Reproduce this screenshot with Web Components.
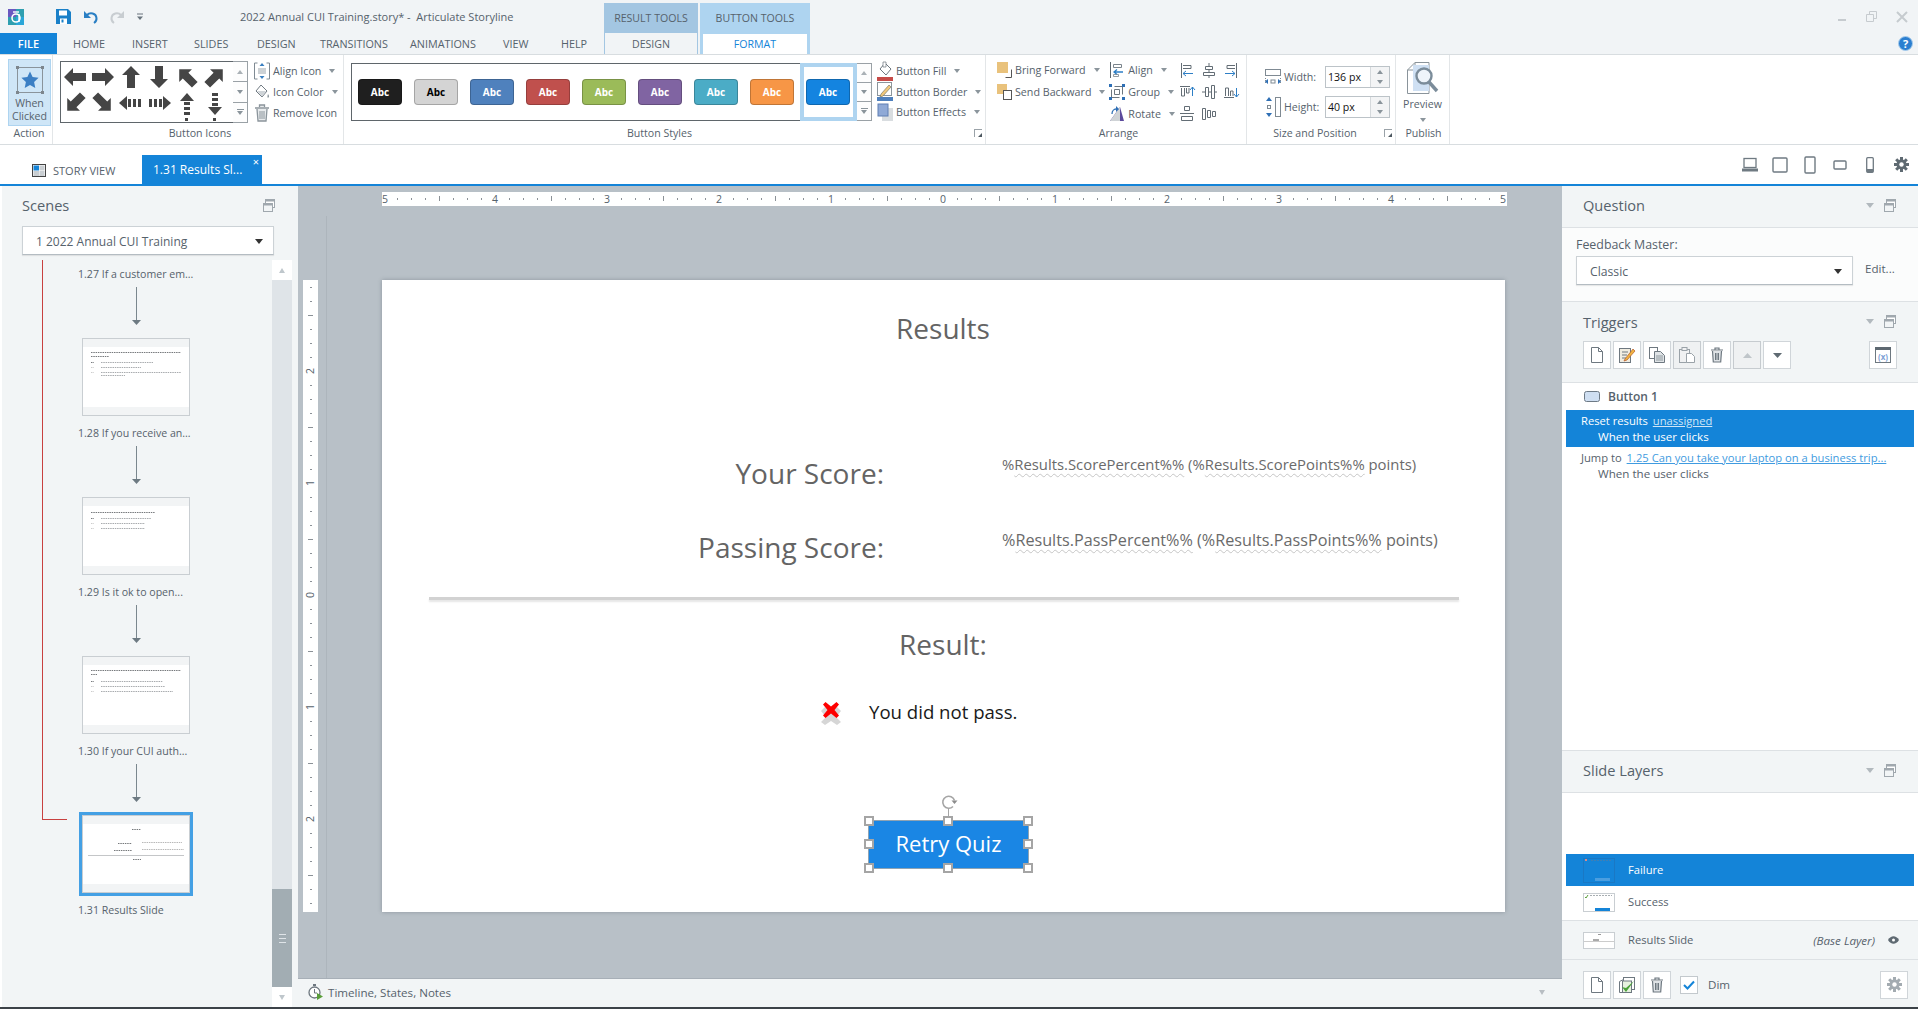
<!DOCTYPE html>
<html>
<head>
<meta charset="utf-8">
<title>Articulate Storyline</title>
<style>
  html, body { margin: 0; padding: 0; background: #fff; overflow: hidden; }
  body { width: 1918px; height: 1009px; font: 11px "Open Sans", "Liberation Sans", sans-serif; color: #56626c; }
</style>
</head>
<body>
<story-app></story-app>

<script>
// Small helper: every element gets an open shadow root with its own styles
function comp(name, css, html) {
    customElements.define(name, class extends HTMLElement {
        constructor() {
            super();
            this.attachShadow({ mode: 'open' });
        }
        connectedCallback() {
            const body = typeof html === 'function' ? html(this) : html;
            this.shadowRoot.innerHTML = `<style>${css}</style>${body}`;
        }
    });
}

const BLUE = '#1484d8';
const arrowSvg = (r) => `<svg width="24" height="24" viewBox="0 0 24 24"><path transform="rotate(${r} 12 12)" fill="#454545" d="M1 12 10 3v5h13v8H10v5z"/></svg>`;

// Icon set, drawn by hand to follow the ribbon glyphs
const ICONS = {
    app: [16, 16, `<rect width="16" height="16" fill="#2f9fb0"/><rect width="8" height="8" fill="#6a58c0"/><rect x="8" y="8" width="8" height="8" fill="#2aa6d8"/><circle cx="8" cy="9" r="4" fill="none" stroke="#fff" stroke-width="1.6"/><path d="M5 3h6" stroke="#fff" stroke-width="1.4"/><path d="M11 5v8" stroke="#fff" stroke-width="1.4"/>`],
    save: [15, 15, `<path d="M0 0h12l3 3v12H0z" fill="#1a80c8"/><rect x="3" y="1.5" width="8" height="5" fill="#fff"/><rect x="4" y="9.5" width="7" height="5.5" fill="#fff"/><rect x="5.5" y="10.5" width="2" height="3" fill="#1a80c8"/>`],
    undo: [15, 15, `<path d="M4 6c3-3 9-2 9.5 3 .2 2-1 4-2.5 5" fill="none" stroke="#2a7fc4" stroke-width="2"/><path d="M1 2v7h7z" fill="#2a7fc4"/>`],
    redo: [15, 15, `<path d="M11 6C8 3 2 4 1.5 9c-.2 2 1 4 2.5 5" fill="none" stroke="#c8cdd1" stroke-width="2"/><path d="M14 2v7H7z" fill="#c8cdd1"/>`],
    qat: [8, 8, `<path d="M1 1h6" stroke="#68737c"/><path d="M1 3.5h6L4 7z" fill="#68737c"/>`],
    min: [10, 10, `<path d="M1 8h8" stroke="#c6cbcf" stroke-width="2"/>`],
    restore: [11, 11, `<path d="M.5 3.5h7v7h-7zM3.5 3V.5h7v7H8" fill="none" stroke="#c6cbcf"/>`],
    close: [12, 12, `<path d="M1 1l10 10M11 1 1 11" stroke="#c6cbcf" stroke-width="2"/>`],
    help: [15, 15, `<circle cx="7.5" cy="7.5" r="7" fill="#2c7fd0" stroke="#a9cdec"/><text x="7.5" y="11.5" text-anchor="middle" font-family="Open Sans" font-weight="700" font-size="11" fill="#fff">?</text>`],
    star: [28, 28, `<path d="M1.5 1.5h25v25h-25z" fill="none" stroke="#8a949b"/><g fill="#7d868d"><rect width="3" height="3"/><rect x="25" width="3" height="3"/><rect y="25" width="3" height="3"/><rect x="25" y="25" width="3" height="3"/></g><path d="M14 5.5l2.6 5.6 6 .7-4.5 4.1 1.2 6L14 19l-5.300 2.900 1.200-6-4.500-4.100 6-.7z" fill="#3b7fc4"/>`],
    alignIcon: [16, 18, `<path d="M.5 1h3M.5 1v16h3M15.500 1h-3M15.500 1v16h-3" fill="none" stroke="#7f8a93"/><path d="M4 7h8M4 9h8M4 11h8" stroke="#9aa4ab"/><path d="M8 1l2.500 3h-5zM8 17l2.500-3h-5z" fill="#3a7fc0"/>`],
    iconColor: [16, 16, `<path d="M7 1l6 6-5 6-6-6z" fill="#fff" stroke="#707a82"/><path d="M3 7h9l-4 5.500z" fill="#cfd4d8"/><path d="M14 10c1 1.500 1.500 2.500.5 3.500S13 13 14 10z" fill="#8a949b"/>`],
    trash: [16, 18, `<path d="M1 4h14M5.500 3V1h5v2M3 5l1 12h8l1-12" fill="#e8ebed" stroke="#8a949b" stroke-width="1.300"/><path d="M6 7v8M8 7v8M10 7v8" stroke="#8a949b"/>`],
    fill: [16, 19, `<path d="M8 1l6 6-5 6-6-6z" fill="#fff" stroke="#6d777f"/><path d="M6 0h3v5H6z" fill="#fff" stroke="#6d777f" stroke-width=".7"/><rect y="15" width="16" height="4" fill="#c64b48"/>`],
    border: [16, 19, `<rect x=".5" y=".5" width="14" height="13" fill="#fff" stroke="#8b959c"/><path d="M4 12 12 3l2 2-8 9-3 1z" fill="#f2c879" stroke="#7a7a6a" stroke-width=".7"/><rect y="15" width="16" height="4" fill="#4f80bd"/>`],
    effects: [16, 18, `<rect x="5" y="5" width="11" height="13" fill="#d9dde0"/><rect x="1" y="1" width="10" height="12" fill="#8fa9d6" stroke="#5f7fb3"/>`],
    forward: [15, 17, `<rect width="11" height="11" fill="#e9c27c"/><path d="M14.500 7.500v8h-6" fill="none" stroke="#555"/>`],
    backward: [15, 17, `<rect width="10" height="10" fill="#e9c27c"/><rect x="6.500" y="6.500" width="8" height="9" fill="#fff" stroke="#555"/>`],
    align: [16, 16, `<path d="M1.500 0v16" stroke="#5e6870"/><path d="M4.500 2.500h8v3h-8z" fill="none" stroke="#7a848c"/><path d="M14 10H5M8 7.500 5 10l3 2.500" fill="none" stroke="#2e7fc6" stroke-width="1.300"/><path d="M4.500 12.500h5v2h-5z" fill="none" stroke="#7a848c" stroke-width=".8"/>`],
    group: [16, 16, `<path d="M5.500 2.500h8v8M10.500 13.500h-8v-8" fill="none" stroke="#6d777f"/><path d="M5.500 5.500h5v5h-5z" fill="none" stroke="#6d777f"/><g fill="#2e6fb5"><rect width="3" height="3"/><rect x="13" width="3" height="3"/><rect y="13" width="3" height="3"/><rect x="13" y="13" width="3" height="3"/></g>`],
    rotate: [16, 16, `<path d="M1 15 15 15 11 1z" fill="#5c4a9c"/><path d="M1 15 11 1v14z" fill="#cfd3d6"/><path d="M3 8c0-3 2-5 4-5" fill="none" stroke="#2e6fb5" stroke-width="1.300"/><path d="M7 0v6L10 3z" fill="#2e6fb5"/>`],
    aL: [14, 15, `<path d="M3 10.500h10M6 8l-3 2.500L6 13" fill="none" stroke="#2e7fc6"/><path d="M1.500 0v15M3 2.500h8v3H3" fill="none" stroke="#636d75"/>`],
    aC: [14, 15, `<path d="M7 0v15" stroke="#636d75"/><path d="M3.500 3.500h7v3h-7zM1.500 9.500h11v3h-11z" fill="#fff" stroke="#636d75"/>`],
    aR: [14, 15, `<path d="M11 10.500H1M8 8l3 2.500L8 13" fill="none" stroke="#2e7fc6"/><path d="M12.500 0v15M11 2.500H3v3h8" fill="none" stroke="#636d75"/>`],
    aT: [15, 14, `<path d="M0 1.500h10" stroke="#636d75"/><path d="M1.500 3v8h3V3M6.500 3v5h2.500V3" fill="none" stroke="#636d75"/><path d="M12.500 11V2M10 5l2.500-3L15 5" fill="none" stroke="#2e7fc6"/>`],
    aM: [15, 14, `<path d="M0 7h15" stroke="#636d75"/><path d="M3.500 2.500h3v9h-3zM9.500 .5h3v13h-3z" fill="#fff" stroke="#636d75"/>`],
    aB: [15, 14, `<path d="M0 12.500h10" stroke="#636d75"/><path d="M1.500 11V3h3v8M6.500 11V6h2.500v5" fill="none" stroke="#636d75"/><path d="M12.500 3v9M10 9l2.500 3L15 9" fill="none" stroke="#2e7fc6"/>`],
    dV: [14, 16, `<path d="M4.500 .5h5v4h-5zM1.500 10.500h11v4h-11z" fill="none" stroke="#636d75"/><path d="M0 7.500h14" stroke="#636d75"/>`],
    dH: [14, 14, `<path d="M.5 1.500h3v11h-3zM5.500 3.500h3v7h-3zM10.500 4.500h3v5h-3z" fill="none" stroke="#636d75"/>`],
    width: [16, 16, `<rect x=".5" y=".5" width="15" height="6" fill="#fff" stroke="#7f8a93"/><path d="M.5 9v5M15.500 9v5" stroke="#7f8a93" stroke-dasharray="1 1"/><rect x="6" y="11" width="4" height="3" fill="none" stroke="#7f8a93"/><path d="M0 12.500l3-2.500v5zM16 12.500 13 10v5z" fill="#2e6fb5"/>`],
    height: [16, 20, `<rect x="10.500" y=".5" width="5" height="19" fill="#fff" stroke="#7f8a93"/><path d="M4 0 7 4H1zM4 20 1 16h6z" fill="#2e6fb5"/><rect x="2.500" y="8.500" width="3" height="3" fill="none" stroke="#7f8a93"/>`],
    preview: [32, 33, `<path d="M8 .5h14v31H.5V8z" fill="#fff" stroke="#8a949b"/><path d="M8 .5V8H.5" fill="none" stroke="#8a949b"/><rect x="6" y="3" width="16" height="26" fill="#cfe0f3"/><circle cx="17" cy="14" r="7.500" fill="#eef4fa" stroke="#7b8c9a" stroke-width="2.400"/><path d="M22 20l8 9" stroke="#7b8c9a" stroke-width="3.400"/>`],
    grid: [14, 13, `<rect x=".5" y=".5" width="13" height="12" fill="#fff" stroke="#444"/><rect x="1.500" y="1.500" width="5.500" height="5" fill="#1484d8"/><rect x="7.500" y="1.500" width="5" height="5" fill="#c9ced2"/><rect x="1.500" y="7" width="5.500" height="5" fill="#c9ced2"/><rect x="7.500" y="7" width="5" height="5" fill="#c9ced2"/>`],
    laptop: [16, 16, `<rect x="2" y="1.500" width="12" height="9" fill="none" stroke="#6f7a82" stroke-width="1.300"/><rect y="11.500" width="16" height="3" fill="#6f7a82"/>`],
    square: [16, 16, `<rect x="1" y="1" width="14" height="14" rx="1" fill="none" stroke="#6f7a82" stroke-width="1.400"/>`],
    tablet: [12, 18, `<rect x="1" y="1" width="10" height="16" rx="1" fill="none" stroke="#6f7a82" stroke-width="1.400"/>`],
    wide: [14, 10, `<rect x="1" y="1" width="12" height="8" rx="1" fill="none" stroke="#6f7a82" stroke-width="1.400"/>`],
    phone: [8, 16, `<rect x=".7" y=".7" width="6.600" height="14.600" rx="1" fill="none" stroke="#6f7a82" stroke-width="1.300"/><rect x="1" y="12" width="6" height="3" fill="#6f7a82"/>`],
    gear: [15, 15, `<g fill="#5f6a72"><circle cx="7.500" cy="7.500" r="5"/><rect x="6" y="0" width="3" height="15"/><rect x="0" y="6" width="15" height="3"/><rect x="6" y="0" width="3" height="15" transform="rotate(45 7.500 7.500)"/><rect x="6" y="0" width="3" height="15" transform="rotate(-45 7.500 7.500)"/></g><circle cx="7.500" cy="7.500" r="2.200" fill="#fff"/>`],
    gearLight: [15, 15, `<g fill="#a3abb1"><circle cx="7.500" cy="7.500" r="5"/><rect x="6" y="0" width="3" height="15"/><rect x="0" y="6" width="15" height="3"/><rect x="6" y="0" width="3" height="15" transform="rotate(45 7.500 7.500)"/><rect x="6" y="0" width="3" height="15" transform="rotate(-45 7.500 7.500)"/></g><circle cx="7.500" cy="7.500" r="2.200" fill="#fff"/>`],
    windows: [12, 13, `<rect x="2.500" y=".5" width="9" height="8" fill="#fff" stroke="#a0a8ae"/><rect x=".5" y="4.500" width="9" height="8" fill="#f2f5f6" stroke="#a0a8ae"/><rect x=".5" y="4" width="9" height="2.500" fill="#a0a8ae"/><rect x="2.500" y="0" width="9" height="2.500" fill="#a0a8ae"/>`],
    doc: [12, 16, `<path d="M.5.5h7l4 4v11H.5z" fill="#fff" stroke="#6e7880"/><path d="M7.500.5v4h4" fill="none" stroke="#6e7880"/>`],
    edit: [16, 16, `<rect x=".5" y="1.500" width="11" height="14" fill="#f1ede2" stroke="#6e7880"/><path d="M3 5h6M3 8h5M3 11h4" stroke="#6e7880"/><path d="M6 12 14 2l2 2-8 9-3 1z" fill="#f0b440" stroke="#b4572a" stroke-width=".7"/>`],
    copy: [16, 16, `<rect x=".5" y=".5" width="8" height="11" fill="#fff" stroke="#6e7880"/><path d="M5.500 4.500h6l4 4v7h-10z" fill="#dfe3e6" stroke="#6e7880"/><path d="M7 9h7M7 11h7M7 13h7" stroke="#6e7880" stroke-width=".7"/>`],
    paste: [16, 16, `<rect x=".5" y="2.500" width="10" height="13" fill="#f0f1f2" stroke="#9aa2a8"/><rect x="3" y=".5" width="5" height="3" fill="#f0f1f2" stroke="#9aa2a8"/><path d="M7.500 6.500h5l3 3v6h-8z" fill="#fff" stroke="#9aa2a8"/>`],
    trashSm: [14, 16, `<path d="M1 3h12M5 2.500V1h4v1.500M2.500 4l.8 11h7.400l.8-11" fill="#dfe3e6" stroke="#6e7880" stroke-width="1.200"/><path d="M5.500 6v7M7 6v7M8.500 6v7" stroke="#6e7880"/>`],
    upTri: [9, 5, `<path d="M4.500 0 9 5H0z" fill="#bfc5c9"/>`],
    downTri: [9, 5, `<path d="M0 0h9L4.500 5z" fill="#5f6a72"/>`],
    vars: [16, 16, `<rect x=".5" y=".5" width="15" height="15" fill="#fff" stroke="#6e7880"/><rect width="16" height="3" fill="#5d6871"/><text x="8" y="12.500" text-anchor="middle" font-family="Open Sans" font-weight="700" font-size="8" fill="#7d9fd6">(x)</text>`],
    shape: [16, 11, `<rect x=".5" y=".5" width="15" height="10" rx="2" fill="#cfdff2" stroke="#6d7a86"/>`],
    eye: [11, 8, `<path d="M0 4c3-5 8-5 11 0-3 5-8 5-11 0z" fill="#5f6a72"/><circle cx="5.500" cy="4" r="1.500" fill="#fff"/>`],
    dup: [16, 16, `<rect x="4.500" y=".5" width="11" height="12" fill="#fff" stroke="#6e7880"/><path d="M.5 4.500l4-2V15.500h-4z" fill="#fff" stroke="#6e7880"/><rect x="3.500" y="4" width="9" height="11.500" fill="#e6f2df" stroke="#6e7880"/><path d="M3 10l4 5 8-11-8 7z" fill="#4ba23a"/>`],
    timer: [15, 16, `<circle cx="6.500" cy="8.500" r="5.500" fill="#fff" stroke="#6d777f" stroke-width="1.300"/><path d="M6.500 5v4H9" fill="none" stroke="#6d777f"/><rect x="5" y="0" width="3" height="2" fill="#6d777f"/><path d="M9 9l6 3.500-6 3.500z" fill="#5a9f3a"/>`]
};

comp('sl-icon', `:host { display: inline-flex; flex: none; line-height: 0; } svg { display: block; overflow: visible; }`, (el) => {
    const [w, h, body] = ICONS[el.getAttribute('name')];
    return `<svg width="${w}" height="${h}" viewBox="0 0 ${w} ${h}">${body}</svg>`;
});

comp('sl-caret', `:host { display: inline-block; flex: none; width: 0; height: 0; border: 3px solid transparent; border-top: 4px solid #8b959c; border-bottom: 0; margin-left: 8px; }`, '');

// Title row and ribbon tabs
comp('title-bar', `
    :host { display: block; background: #f1f4f6; height: 54px; border-bottom: 1px solid #d8dde0; color: #56626c; }
    .row { display: flex; align-items: center; }
    .top { height: 33px; }
    .tabs { height: 21px; }
    .title { width: 364px; font-size: 11px; }
    .ctx { align-self: flex-end; height: 30px; display: flex; align-items: center; justify-content: center; font-size: 10.6px; }
    .result { width: 94px; background: #a3c6e2; margin-right: 2px; }
    .button { width: 110px; background: #aed4f0; }
    .win { margin-left: auto; display: flex; align-items: center; padding-right: 10px; }
    .file { width: 57px; height: 100%; background: ${BLUE}; color: #fff; display: flex; align-items: center; justify-content: center; font-size: 11px; font-weight: 600; margin-right: 16px; }
    .tab { font-size: 10.8px; display: block; }
    .cdesign, .cformat { height: 100%; box-sizing: border-box; display: flex; align-items: center; justify-content: center; font-size: 10.6px; }
    .cdesign { width: 94px; margin-left: 18px; border: solid #a3c6e2; border-width: 0 1px; }
    .cformat { width: 110px; margin-left: 2px; background: #fff; color: ${BLUE}; border: solid #aed4f0; border-width: 1px 3px 0; }
    .help { margin-left: auto; margin-right: 5px; }
`, `
    <div class="row top">
        <sl-icon name="app" style="margin-left:8px"></sl-icon>
        <sl-icon name="save" style="margin-left:32px"></sl-icon>
        <sl-icon name="undo" style="margin-left:12px"></sl-icon>
        <sl-icon name="redo" style="margin-left:12px"></sl-icon>
        <sl-icon name="qat" style="margin-left:11px"></sl-icon>
        <span class="title" style="margin-left:96px">2022 Annual CUI Training.story* -&nbsp; Articulate Storyline</span>
        <span class="ctx result">RESULT TOOLS</span>
        <span class="ctx button">BUTTON TOOLS</span>
        <span class="win">
            <sl-icon name="min" style="margin-right:19px"></sl-icon>
            <sl-icon name="restore" style="margin-right:19px"></sl-icon>
            <sl-icon name="close"></sl-icon>
        </span>
    </div>
    <div class="row tabs">
        <span class="file">FILE</span>
        <span class="tab" style="width:59px">HOME</span>
        <span class="tab" style="width:62px">INSERT</span>
        <span class="tab" style="width:63px">SLIDES</span>
        <span class="tab" style="width:63px">DESIGN</span>
        <span class="tab" style="width:90px">TRANSITIONS</span>
        <span class="tab" style="width:93px">ANIMATIONS</span>
        <span class="tab" style="width:58px">VIEW</span>
        <span class="tab" style="width:25px">HELP</span>
        <span class="cdesign">DESIGN</span>
        <span class="cformat">FORMAT</span>
        <sl-icon class="help" name="help"></sl-icon>
    </div>
`);

// One group on the ribbon, label underneath
comp('rb-group', `
    :host { display: flex; flex-direction: column; flex: none; height: 89px; box-sizing: border-box; border-right: 1px solid #e3e6e8; position: relative; }
    .content { height: 70px; display: flex; }
    .label { height: 16px; line-height: 16px; text-align: center; font-size: 10.6px; color: #56626c; }
    .launch { position: absolute; right: 3px; bottom: 7px; width: 7px; height: 7px; border: solid #9aa2a8; border-width: 1px 0 0 1px; }
    .launch::after { content: ""; position: absolute; right: 0; bottom: 0; border: 2.5px solid #4d5860; border-top-color: transparent; border-left-color: transparent; }
`, (el) => `
    <div class="content"><slot></slot></div>
    <div class="label" style="${el.getAttribute('label-style') || ''}">${el.getAttribute('label')}</div>
    ${el.hasAttribute('launcher') ? '<span class="launch"></span>' : ''}
`);

comp('rb-cmd', `
    :host { display: flex; align-items: center; height: 21px; font-size: 10.7px; white-space: nowrap; color: #56626c; }
    .ic { width: 16px; display: flex; justify-content: center; margin-right: 3px; }
`, (el) => `
    <span class="ic"><sl-icon name="${el.getAttribute('icon')}"></sl-icon></span><slot></slot>
    ${el.hasAttribute('caret') ? '<sl-caret></sl-caret>' : ''}
`);

comp('rb-spin', `
    :host { display: flex; flex-direction: column; flex: none; width: 15px; box-sizing: border-box; border: 1px solid #9aa1a6; border-left: 0; background: #fff; }
    i { flex: 1; display: flex; align-items: center; justify-content: center; border-bottom: 1px solid #9aa1a6; background: #fdfdfd; }
    i:last-child { border: 0; flex-direction: column; gap: 1px; }
    b { display: block; width: 0; height: 0; border: 3px solid transparent; }
    .u { border-bottom: 4px solid #aab1b6; border-top: 0; }
    .d { border-top: 4px solid #8a949b; border-bottom: 0; }
    s { display: block; width: 7px; height: 1px; background: #8a949b; }
`, `<i><b class="u"></b></i><i><b class="d"></b></i><i><s></s><b class="d"></b></i>`);

comp('arrow-gallery', `
    :host { display: flex; flex: none; height: 62px; margin: 6px 0 0 7px; }
    .box { width: 173px; box-sizing: border-box; border: 1px solid #5f666b; border-right: 0; background: #fff; overflow: hidden; display: grid; grid-template-columns: repeat(6, 28px); grid-auto-rows: 26px; padding: 3px 0 0 2px; }
    svg { display: block; }
`, () => {
    const dashH = (flip) => `<svg width="24" height="24" viewBox="0 0 24 24"><g fill="#454545" transform="${flip ? 'rotate(180 12 12)' : ''}"><path d="M0 12l8-7v14z"/><rect x="9" y="8" width="3" height="8"/><rect x="14" y="8" width="3" height="8"/><rect x="19" y="8" width="3" height="8"/></g></svg>`;
    const dashV = (flip) => `<svg width="24" height="26" viewBox="0 0 24 26"><g fill="#454545" transform="${flip ? 'rotate(180 12 13)' : ''}"><path d="M12 2l7 8H5z"/><rect x="9" y="11" width="6" height="3"/><rect x="9" y="16" width="6" height="3"/><rect x="9" y="21" width="6" height="3"/></g></svg>`;
    const dots = `<svg width="24" height="6"><rect x="10" y="1" width="3" height="3" fill="#454545"/></svg>`;
    const cells = [arrowSvg(0), arrowSvg(180), arrowSvg(90), arrowSvg(270), arrowSvg(45), arrowSvg(135),
        arrowSvg(315), arrowSvg(225), dashH(false), dashH(true), dashV(false), dashV(true),
        '<i></i>', '<i></i>', '<i></i>', '<i></i>', dots, dots];
    return `<div class="box">${cells.join('')}</div><rb-spin></rb-spin>`;
});

comp('style-gallery', `
    :host { display: flex; flex: none; height: 58px; margin: 8px 0 0 7px; }
    .box { width: 506px; box-sizing: border-box; border: 1px solid #5f666b; border-right: 0; background: #fff; display: flex; align-items: center; gap: 12px; padding-left: 6px; position: relative; }
    .abc { width: 44px; height: 26px; box-sizing: border-box; border-radius: 4px; border: 1px solid rgba(0,0,0,.22); color: #fff; font-size: 10px; font-weight: 700; display: flex; align-items: center; justify-content: center; }
    .sel { position: absolute; left: 448px; top: -1px; width: 57px; height: 58px; box-sizing: border-box; border: 4px solid #aed4f0; }
`, () => {
    const colors = ['#1f1f1f', '#d4d4d4', '#4f81bd', '#c0504d', '#9bbb59', '#8064a2', '#4bacc6', '#f79646', '#1484e0'];
    const items = colors.map((c, i) => `<span class="abc" style="background:${c};${i === 1 ? 'color:#000' : ''}">Abc</span>`).join('');
    return `<div class="box">${items}<span class="sel"></span></div><rb-spin></rb-spin>`;
});

comp('num-field', `
    :host { display: flex; align-items: center; height: 22px; font-size: 10.6px; color: #56626c; }
    .lb { width: 41px; flex: none; }
    .in { width: 65px; height: 22px; box-sizing: border-box; border: 1px solid #bcc3c8; display: flex; background: #fff; }
    .v { flex: 1; padding-left: 2px; line-height: 20px; color: #111; }
    .sp { width: 18px; border-left: 1px solid #d5d9dc; background: #f3f4f5; display: flex; flex-direction: column; }
    .sp i { flex: 1; display: flex; align-items: center; justify-content: center; }
    b { display: block; width: 0; height: 0; border: 3px solid transparent; }
    .u { border-bottom: 4px solid #8a949b; border-top: 0; }
    .d { border-top: 4px solid #8a949b; border-bottom: 0; }
    sl-icon { width: 16px; margin-right: 3px; }
`, (el) => `
    <sl-icon name="${el.getAttribute('icon')}"></sl-icon>
    <span class="lb">${el.getAttribute('label')}</span>
    <div class="in"><span class="v">${el.getAttribute('value')}</span><div class="sp"><i><b class="u"></b></i><i><b class="d"></b></i></div></div>
`);

comp('rb-ribbon', `
    :host { display: flex; height: 90px; box-sizing: border-box; border-bottom: 1px solid #d8dde0; background: #fff; }
    .when { width: 43px; height: 67px; box-sizing: border-box; margin: 4px 0 0 8px; background: #cfe6f7; border: 1px solid #aed4f0; text-align: center; font-size: 10.6px; line-height: 13px; padding-top: 6px; }
    .when sl-icon { display: flex; justify-content: center; margin-bottom: 3px; }
    .col { display: flex; flex-direction: column; }
    .icons { display: grid; grid-template-columns: repeat(3, 22px); grid-auto-rows: 22px; align-items: center; justify-items: start; margin-top: 4px; }
    .prev { display: flex; flex-direction: column; align-items: center; width: 55px; padding-top: 7px; font-size: 10.6px; line-height: 14px; }
    .prev span { margin-top: 2px; }
    .prev sl-caret { margin: 7px 0 0; }
`, `
    <rb-group label="Action" style="width:53px" label-style="padding-left:6px">
        <div class="when"><sl-icon name="star"></sl-icon>When<br>Clicked</div>
    </rb-group>
    <rb-group label="Button Icons" style="width:291px" label-style="padding-left:4px">
        <arrow-gallery></arrow-gallery>
        <div class="col" style="margin:5px 0 0 6px">
            <rb-cmd icon="alignIcon" caret>Align Icon</rb-cmd>
            <rb-cmd icon="iconColor" caret>Icon Color</rb-cmd>
            <rb-cmd icon="trash">Remove Icon</rb-cmd>
        </div>
    </rb-group>
    <rb-group label="Button Styles" style="width:642px" label-style="padding-right:10px" launcher>
        <style-gallery></style-gallery>
        <div class="col" style="margin:6px 0 0 5px">
            <rb-cmd icon="fill" caret style="height:20.500px">Button Fill</rb-cmd>
            <rb-cmd icon="border" caret style="height:20.500px">Button Border</rb-cmd>
            <rb-cmd icon="effects" caret style="height:20.500px">Button Effects</rb-cmd>
        </div>
    </rb-group>
    <rb-group label="Arrange" style="width:261px" label-style="padding-left:5px">
        <div class="col" style="width:117px;margin:4px 0 0 10px">
            <rb-cmd icon="forward" caret style="height:22px">Bring Forward</rb-cmd>
            <rb-cmd icon="backward" caret style="height:22px">Send Backward</rb-cmd>
        </div>
        <div class="col" style="width:73px;margin-top:4px">
            <rb-cmd icon="align" caret style="height:22px">Align</rb-cmd>
            <rb-cmd icon="group" caret style="height:22px">Group</rb-cmd>
            <rb-cmd icon="rotate" caret style="height:22px">Rotate</rb-cmd>
        </div>
        <div class="icons">
            <sl-icon name="aL"></sl-icon><sl-icon name="aC"></sl-icon><sl-icon name="aR"></sl-icon>
            <sl-icon name="aT"></sl-icon><sl-icon name="aM"></sl-icon><sl-icon name="aB"></sl-icon>
            <sl-icon name="dV"></sl-icon><sl-icon name="dH"></sl-icon>
        </div>
    </rb-group>
    <rb-group label="Size and Position" style="width:149px" label-style="padding-right:12px" launcher>
        <div class="col" style="margin:11px 0 0 18px;gap:8px">
            <num-field icon="width" label="Width:" value="136 px"></num-field>
            <num-field icon="height" label="Height:" value="40 px"></num-field>
        </div>
    </rb-group>
    <rb-group label="Publish" style="width:54px" label-style="padding-left:2px">
        <div class="prev"><sl-icon name="preview"></sl-icon><span>Preview</span><sl-caret></sl-caret></div>
    </rb-group>
`);

comp('tab-strip', `
    :host { display: flex; align-items: flex-end; height: 41px; box-sizing: border-box; border-bottom: 2px solid ${BLUE}; background: #fff; padding-left: 32px; }
    .story { display: flex; align-items: center; height: 29px; font-size: 11px; width: 110px; padding-top: 1px; box-sizing: border-box; }
    .story sl-icon { margin-right: 7px; }
    .active { width: 120px; height: 29px; box-sizing: border-box; background: ${BLUE}; color: #fff; font-size: 12px; padding-left: 11px; line-height: 30px; position: relative; }
    .active i { position: absolute; right: 3px; top: 0; font-style: normal; font-size: 11px; line-height: 14px; }
    .devices { margin-left: auto; height: 100%; display: flex; align-items: center; padding-right: 9px; }
`, `
    <div class="story"><sl-icon name="grid"></sl-icon>STORY VIEW</div>
    <div class="active">1.31 Results Sl...<i>×</i></div>
    <div class="devices">
        <sl-icon name="laptop" style="margin-right:14px"></sl-icon>
        <sl-icon name="square" style="margin-right:16px"></sl-icon>
        <sl-icon name="tablet" style="margin-right:17px"></sl-icon>
        <sl-icon name="wide" style="margin-right:19px"></sl-icon>
        <sl-icon name="phone" style="margin-right:20px"></sl-icon>
        <sl-icon name="gear"></sl-icon>
    </div>
`);

// Tiny line drawings inside the slide thumbnails, rows of broken specks
function thumbLines(kind) {
    const dk = '#76797c';
    const lt = '#a8abae';
    const q = (rows) => rows.map(([x, y, w, c]) => `<path d="M${x} ${y + .5}h${w}" stroke="${c || dk}" stroke-dasharray="1.500 .8"/>`).join('');
    if (kind === 'a') return q([[8, 13, 90], [8, 17, 18], [8, 23, 3], [18, 23, 52, lt], [8, 28, 3, '#ccc'], [18, 28, 40, lt], [8, 33, 3, '#ccc'], [18, 33, 80, lt], [18, 36, 24, lt]]);
    if (kind === 'b') return q([[8, 14, 64], [8, 20, 3], [18, 20, 50, lt], [8, 25, 3, '#ccc'], [18, 25, 44, lt], [8, 30, 3, '#ccc'], [18, 30, 44, lt]]);
    if (kind === 'c') return q([[8, 13, 90], [8, 17, 6], [8, 24, 3], [18, 24, 62, lt], [8, 29, 3, '#ccc'], [18, 29, 64, lt], [8, 34, 3, '#ccc'], [18, 34, 72, lt]]);
    return q([[49, 13, 9], [35, 27, 14], [59, 26, 40, '#b8b8b8'], [31, 34, 18], [59, 33, 42, '#b8b8b8'], [50, 43, 8]]) + '<rect x="5" y="39" width="96" height="1" fill="#c4c6c8"/>';
}

comp('scene-card', `
    :host { display: block; width: 190px; }
    .thumb { display: block; box-sizing: border-box; width: 108px; height: 78px; margin-left: 4px; border: 1px solid #c9ced2; background: #fff; position: relative; outline: 0 solid #44a0e4; }
    :host([selected]) .thumb { outline-width: 3px; }
    .thumb::before, .thumb::after { content: ""; position: absolute; left: 0; right: 0; height: 8px; background: #f2f4f5; }
    .thumb::before { top: 0; } .thumb::after { bottom: 0; }
    svg { position: absolute; inset: 0; width: 106px; height: 76px; }
    .label { height: 16px; line-height: 16px; font-size: 10.6px; white-space: nowrap; margin-top: 9px; color: #56626c; }
    .arrow { display: block; margin: 5px 0 0 54px; }
`, (el) => {
    const k = el.getAttribute('kind');
    const thumb = k ? `<div class="thumb"><svg viewBox="0 0 106 76">${thumbLines(k)}</svg></div>` : '';
    const arrow = el.hasAttribute('arrow') ? `<svg class="arrow" style="position:static;width:9px;height:38px" viewBox="0 0 9 38"><path d="M4.500 0v33" stroke="#7a878e"/><path d="M0 33h9l-4.500 5z" fill="#6d7a82"/></svg>` : '';
    return `${thumb}<div class="label"><slot></slot></div>${arrow}`;
});

comp('v-scroll', `
    :host { display: flex; flex-direction: column; width: 20px; background: #dfe4e8; flex: none; }
    .btn { height: 20px; background: #fff; display: flex; align-items: center; justify-content: center; flex: none; }
    .space { flex: 1; }
    .thumb { height: 98px; flex: none; background: #a2adb3; display: flex; align-items: center; justify-content: center; }
    .thumb i { display: block; width: 7px; height: 7px; border: solid #dfe4e8; border-width: 1px 0; background: linear-gradient(#dfe4e8, #dfe4e8) center / 100% 1px no-repeat; }
    b { display: block; width: 0; height: 0; border: 3.5px solid transparent; }
    .u { border-bottom: 5px solid #bfc7cc; border-top: 0; }
    .d { border-top: 5px solid #bfc7cc; border-bottom: 0; }
`, `<div class="btn"><b class="u"></b></div><div class="space"></div><div class="thumb"><i></i></div><div class="btn"><b class="d"></b></div>`);

comp('drop-down', `
    :host { display: flex; align-items: center; height: 29px; box-sizing: border-box; background: #fff; border: 1px solid #ccd2d6; border-bottom-color: #b4bcc2; box-shadow: 0 1px 1px rgba(0,0,0,.08); padding: 1px 10px 0 13px; font-size: 12px; color: #56626c; }
    .t { flex: 1; white-space: nowrap; }
    b { display: block; width: 0; height: 0; border: 4px solid transparent; border-top: 5px solid #333; border-bottom: 0; }
`, `<span class="t"><slot></slot></span><b></b>`);

comp('scene-panel', `
    :host { display: block; width: 296px; margin-left: 2px; flex: none; background: #f2f5f6; position: relative; height: 100%; }
    .head { display: flex; align-items: center; justify-content: space-between; height: 40px; padding: 0 23px 2px 20px; box-sizing: border-box; font-size: 14.6px; color: #56626c; }
    drop-down { margin-left: 20px; width: 252px; }
    .body { display: flex; height: 747px; margin-top: 5px; }
    .list { width: 270px; padding-left: 76px; box-sizing: border-box; height: 100%; overflow: hidden; }
    .list scene-card:first-child { margin-top: -3px; }
    .flow { position: absolute; left: 40px; top: 74px; width: 24px; height: 559px; border: solid #c8413f; border-width: 0 0 1px 1px; }
    v-scroll { height: 100%; }
`, `
    <div class="head">Scenes<sl-icon name="windows"></sl-icon></div>
    <drop-down>1 2022 Annual CUI Training</drop-down>
    <div class="body">
        <div class="list">
            <scene-card arrow>1.27 If a customer em...</scene-card>
            <scene-card kind="a" arrow style="margin-top:13px">1.28 If you receive an...</scene-card>
            <scene-card kind="b" arrow style="margin-top:13px">1.29 Is it ok to open...</scene-card>
            <scene-card kind="c" arrow style="margin-top:13px">1.30 If your CUI auth...</scene-card>
            <scene-card kind="r" selected style="margin-top:13px">1.31 Results Slide</scene-card>
        </div>
        <v-scroll></v-scroll>
    </div>
    <div class="flow"></div>
`);

// Rulers: ticks every 14px, numbers every 112px
comp('h-ruler', `:host { display: block; width: 1125px; height: 14px; background: #fff; } svg { display: block; }`, () => {
    let s = '';
    for (let x = 1; x < 1125; x += 14) {
        const n = Math.round((x - 1) / 14);
        if (n % 8 === 0) {
            const anchor = n === 0 ? 'start' : n === 80 ? 'end' : 'middle';
            const tx = n === 0 ? 0 : n === 80 ? 1124 : x;
            s += `<text x="${tx}" y="11" text-anchor="${anchor}" font-family="Open Sans" font-size="10.500" fill="#56626c">${Math.abs(5 - n / 8)}</text>`;
        } else {
            s += `<rect x="${x}" y="${n % 4 === 0 ? 4 : 6}" width="1" height="${n % 4 === 0 ? 5 : 2}" fill="#8b9197"/>`;
        }
    }
    return `<svg width="1125" height="14">${s}</svg>`;
});

comp('v-ruler', `:host { display: block; width: 15px; height: 632px; background: #fff; flex: none; } svg { display: block; }`, () => {
    let s = '';
    // 0 sits 316px down the ruler, the slide's centre
    for (let y = 7; y < 632; y += 14) {
        const k = ((y - 315) % 112 + 112) % 112;
        if (k === 0) {
            s += `<text transform="translate(11 ${y}) rotate(-90)" text-anchor="middle" font-family="Open Sans" font-size="10.500" fill="#56626c">${Math.abs((y - 315) / 112)}</text>`;
        } else {
            const long = k % 56 === 0;
            s += `<rect x="${long ? 5 : 7}" y="${y}" width="${long ? 5 : 2}" height="1" fill="#8b9197"/>`;
        }
    }
    return `<svg width="15" height="632">${s}</svg>`;
});

// The slide itself is a free canvas, its objects carry their own place
comp('slide-canvas', `
    :host { display: block; position: relative; width: 1123px; height: 632px; background: #fff; box-shadow: 0 0 4px rgba(60,70,80,.35); flex: none; }
`, `<slot></slot>`);

comp('slide-text', `
    :host { position: absolute; display: block; color: #646464; white-space: nowrap; }
`, `<slot></slot>`);

// Variable names carry the spell checker's wavy line
comp('var-text', `
    :host { display: inline; text-decoration: underline wavy #c6c6c6 1px; text-underline-offset: 3px; text-decoration-skip-ink: none; }
`, `<slot></slot>`);

comp('slide-rule', `
    :host { position: absolute; display: block; left: 47px; top: 317px; width: 1030px; height: 3px; background: #d2d2d2; box-shadow: 0 2px 2px rgba(0,0,0,.1); }
`, '');

comp('fail-mark', `
    :host { position: absolute; display: block; left: 56px; top: 0; } svg { display: block; overflow: visible; }
`, `<svg width="22" height="26" viewBox="0 0 22 26">
    <path d="M5 8l6 5 6-5 4 4-5 6 5 5-4 3-6-4-6 4-4-3 5-5-5-6z" fill="#d6d6d6"/>
    <path d="M5.500 3l5.500 4.500L16.500 3l2.500 2.500-4.500 5.500 4.500 5.500-2.500 2.500-5.500-4.500L5.500 19 3 16.500 7.500 11 3 5.500z" fill="#fe0000"/>
</svg>`);

comp('selected-button', `
    :host { position: absolute; display: block; left: 487px; top: 541px; width: 159px; height: 47px; box-sizing: border-box; background: #1a86e4; border-radius: 2px; color: #fff; font-size: 22px; text-align: center; line-height: 45px; box-shadow: 0 0 0 1px #8fa3b3; }
    i { position: absolute; width: 6px; height: 6px; background: #fff; border: 1px solid #a5a5a5; box-shadow: 0 0 0 1px #a5a5a5; margin: -4px 0 0 -4px; box-sizing: content-box; }
    .stem { position: absolute; left: 79px; top: -12px; width: 1px; height: 12px; background: #a5a5a5; }
    svg { position: absolute; left: 72px; top: -27px; }
`, `
    <slot></slot>
    <span class="stem"></span>
    <svg width="18" height="16" viewBox="0 0 18 16"><path d="M12 12.500A6 6 0 1 1 13.500 6.500" fill="none" stroke="#a5a5a5" stroke-width="1.600"/><path d="M10.500 6.500h6L13.500 10z" fill="#8c8c8c"/></svg>
    <i style="left:0;top:0"></i><i style="left:79px;top:0"></i><i style="left:159px;top:0"></i>
    <i style="left:0;top:23px"></i><i style="left:159px;top:23px"></i>
    <i style="left:0;top:47px"></i><i style="left:79px;top:47px"></i><i style="left:159px;top:47px"></i>
`);

comp('canvas-stage', `
    :host { display: flex; flex-direction: column; flex: 1; min-width: 0; height: 100%; background: #b8c0c7; position: relative; box-sizing: border-box; padding-top: 6px; }
    :host::before { content: ""; position: absolute; left: 28px; top: 30px; bottom: 29px; width: 1px; background: #adb5bc; }
    .hr { margin-left: 84px; flex: none; }
    .row { display: flex; margin-top: 74px; padding-left: 5px; flex: none; }
    .gap { width: 64px; flex: none; }
    .foot { margin-top: auto; height: 29px; flex: none; background: #f2f5f6; border-top: 1px solid #a7afb7; box-sizing: border-box; display: flex; align-items: center; padding: 0 17px 2px 10px; font-size: 11.600px; color: #56626c; position: relative; z-index: 1; }
    .foot sl-icon { margin-right: 5px; }
    .foot b { margin-left: auto; width: 0; height: 0; border: 3.500px solid transparent; border-top: 5px solid #b8bec3; border-bottom: 0; }
`, `
    <h-ruler class="hr"></h-ruler>
    <div class="row">
        <v-ruler></v-ruler>
        <span class="gap"></span>
        <slide-canvas>
            <slide-text style="left:411px;top:30px;width:300px;text-align:center;font-size:28px;line-height:36px">Results</slide-text>
            <slide-text style="left:202px;top:175px;width:300px;text-align:right;font-size:28px;line-height:36px">Your Score:</slide-text>
            <slide-text style="left:202px;top:249px;width:300px;text-align:right;font-size:28px;line-height:36px">Passing Score:</slide-text>
            <slide-text style="left:620px;top:172px;font-size:14.850px;line-height:24px;color:#6a6a6a">%<var-text>Results.ScorePercent%%</var-text> (%<var-text>Results.ScorePoints%%</var-text> points)</slide-text>
            <slide-text style="left:620px;top:248px;font-size:16.200px;line-height:24px;color:#6a6a6a">%<var-text>Results.PassPercent%%</var-text> (%<var-text>Results.PassPoints%%</var-text> points)</slide-text>
            <slide-rule></slide-rule>
            <slide-text style="left:411px;top:346px;width:300px;text-align:center;font-size:28px;line-height:36px">Result:</slide-text>
            <slide-text style="left:382px;top:419px;width:100px;height:26px"><fail-mark></fail-mark></slide-text>
            <slide-text style="left:487px;top:418px;font-size:18.600px;line-height:28px;color:#1a1a1a">You did not pass.</slide-text>
            <selected-button>Retry Quiz</selected-button>
        </slide-canvas>
    </div>
    <div class="foot"><sl-icon name="timer"></sl-icon>Timeline, States, Notes<b></b></div>
`);

comp('panel-head', `
    :host { display: flex; align-items: center; height: 42px; box-sizing: border-box; padding: 0 22px 3px 21px; font-size: 14.600px; color: #56626c; flex: none; }
    .t { flex: 1; }
    b { width: 0; height: 0; border: 4px solid transparent; border-top: 5px solid #b2b9be; border-bottom: 0; margin-right: 10px; }
`, `<span class="t"><slot></slot></span><b></b><sl-icon name="windows"></sl-icon>`);

comp('tool-btn', `
    :host { display: flex; align-items: center; justify-content: center; width: 28px; height: 28px; box-sizing: border-box; border: 1px solid #d0d5d9; background: #fff; flex: none; }
    :host([off]) { background: #eff1f2; border-color: #c6cbcf; }
`, (el) => `<sl-icon name="${el.getAttribute('icon')}"></sl-icon>`);

comp('layer-row', `
    :host { display: flex; align-items: center; padding-left: 21px; font-size: 11.200px; color: #56626c; box-sizing: border-box; flex: none; }
    :host([active]) { margin: 0 4px; padding-left: 17px; background: ${BLUE}; color: #fff; }
    .th { width: 32px; box-sizing: border-box; background: #fff; border: 1px solid #c9ced2; flex: none; margin-right: 13px; position: relative; overflow: hidden; }
    :host([active]) .th { background: ${BLUE}; border-color: #1a78c4; }
    .t { flex: 1; padding-bottom: 1px; }
`, (el) => {
    const k = el.getAttribute('kind');
    let mark = '';
    if (k === 'f') mark = '<svg width="30" height="23" style="display:block"><rect x="1" y="0" width="2" height="2" fill="#d98a8a"/><path d="M7 1.500h20" stroke="#3f7fb5" stroke-dasharray="2 1"/><rect x="11" y="19" width="15" height="3" fill="#4a9ee0"/></svg>';
    if (k === 's') mark = '<svg width="30" height="17" style="display:block"><path d="M1 3 2 4 4 1" stroke="#5a9f3a" fill="none"/><path d="M6 1.500h22" stroke="#a8aeb2" stroke-dasharray="2 1"/><rect x="11" y="14" width="15" height="3" fill="#1484d8"/></svg>';
    if (k === 'b') mark = '<svg width="30" height="15" style="display:block"><rect x="14" y="1" width="3" height="1" fill="#999"/><rect x="9" y="6" width="6" height="2" fill="#aaa"/><rect x="0" y="8" width="30" height="1" fill="#ccc"/></svg>';
    return `<span class="th" style="height:${k === 'f' ? 25 : k === 's' ? 19 : 17}px">${mark}</span><span class="t"><slot></slot></span><slot name="end"></slot>`;
});

comp('right-panel', `
    :host { display: flex; flex-direction: column; width: 356px; flex: none; height: 100%; background: #fff; font-size: 11.200px; color: #56626c; box-sizing: border-box; }
    .grey { background: #f2f5f6; }
    .line { border-bottom: 1px solid #dde1e4; }
    .master { height: 74px; box-sizing: border-box; padding: 8px 0 0 14px; background: #fbfcfc; }
    .master .lb { height: 18px; line-height: 18px; font-size: 12.400px; }
    .pick { display: flex; align-items: center; margin-top: 2px; }
    .pick drop-down { width: 277px; font-size: 12.200px; }
    .pick span { margin-left: 12px; font-size: 11.600px; margin-top: -4px; }
    .tools { display: flex; gap: 2px; padding: 0 21px; height: 42px; margin-top: -2px; box-sizing: border-box; }
    .tools .push { margin-left: auto; }
    .list { flex: 1; min-height: 0; }
    .obj { display: flex; align-items: center; height: 27px; padding-left: 22px; font-weight: 600; font-size: 12px; }
    .obj sl-icon { margin-right: 8px; }
    .tr { padding: 0 0 0 19px; line-height: 16px; white-space: nowrap; }
    .tr p { margin: 0; } .tr p + p { padding-left: 17px; font-size: 11.600px; }
    .sel { margin: 0 4px; padding: 3px 0 2px 15px; background: ${BLUE}; color: #fff; height: 37px; box-sizing: border-box; }
    .sel a { color: #cfe6f7; }
    a { color: #3f9be0; text-decoration: underline; margin-left: 2px; }
    .blank { height: 61px; flex: none; }
    .foot { display: flex; align-items: center; gap: 2px; height: 47px; flex: none; padding: 2px 10px 0 21px; box-sizing: border-box; background: #f2f5f6; }
    .foot .chk { width: 18px; height: 18px; box-sizing: border-box; background: #fff; border: 1px solid #c3c9cd; margin: 0 8px 0 7px; display: flex; align-items: center; justify-content: center; }
    .foot .dim { flex: 1; font-size: 11.600px; }
`, `
    <panel-head class="grey line">Question</panel-head>
    <div class="master line">
        <div class="lb">Feedback Master:</div>
        <div class="pick"><drop-down>Classic</drop-down><span>Edit...</span></div>
    </div>
    <panel-head class="grey" style="height:41px;padding-bottom:2px">Triggers</panel-head>
    <div class="tools grey line">
        <tool-btn icon="doc"></tool-btn><tool-btn icon="edit"></tool-btn><tool-btn icon="copy"></tool-btn>
        <tool-btn icon="paste" off></tool-btn><tool-btn icon="trashSm"></tool-btn>
        <tool-btn icon="upTri" off></tool-btn><tool-btn icon="downTri"></tool-btn>
        <tool-btn class="push" icon="vars"></tool-btn>
    </div>
    <div class="list line">
        <div class="obj"><sl-icon name="shape"></sl-icon>Button 1</div>
        <div class="tr sel"><p>Reset results <a>unassigned</a></p><p>When the user clicks</p></div>
        <div class="tr" style="padding-top:3px"><p>Jump to <a>1.25 Can you take your laptop on a business trip...</a></p><p>When the user clicks</p></div>
    </div>
    <panel-head class="grey line">Slide Layers</panel-head>
    <div class="blank"></div>
    <layer-row active kind="f" style="height:32px">Failure</layer-row>
    <layer-row kind="s" style="height:34px;padding-bottom:2px">Success</layer-row>
    <layer-row kind="b" class="grey line" style="height:40px;border-top:1px solid #dde1e4">Results Slide<span slot="end" style="font-style:italic;font-size:11.600px;margin-right:13px">(Base Layer)</span><sl-icon slot="end" name="eye" style="margin-right:19px"></sl-icon></layer-row>
    <div class="foot">
        <tool-btn icon="doc"></tool-btn><tool-btn icon="dup"></tool-btn><tool-btn icon="trashSm"></tool-btn>
        <span class="chk"><svg width="12" height="10" viewBox="0 0 12 10"><path d="M1 5l3.500 3.500L11 1.500" fill="none" stroke="#1484d8" stroke-width="2"/></svg></span>
        <span class="dim">Dim</span>
        <tool-btn icon="gearLight"></tool-btn>
    </div>
`);

comp('story-app', `
    :host { display: flex; flex-direction: column; width: 1918px; height: 1009px; overflow: hidden; background: #fff; }
    .main { display: flex; height: 821px; flex: none; }
    .edge { height: 2px; background: #3c4248; flex: none; }
`, `
    <title-bar></title-bar>
    <rb-ribbon></rb-ribbon>
    <tab-strip></tab-strip>
    <div class="main">
        <scene-panel></scene-panel>
        <canvas-stage></canvas-stage>
        <right-panel></right-panel>
    </div>
    <div class="edge"></div>
`);
</script>
</body>
</html>
